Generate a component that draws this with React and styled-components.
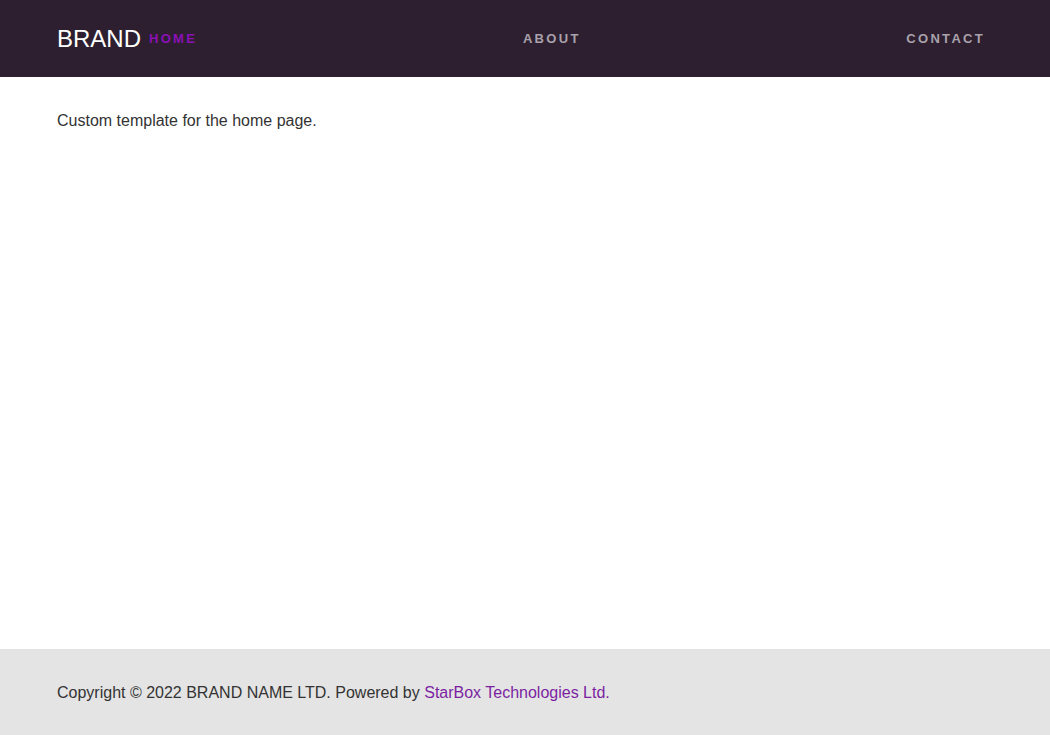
import React from "react";
import styled, { createGlobalStyle } from "styled-components";

const GlobalStyle = createGlobalStyle`
  html, body {
    margin: 0;
    padding: 0;
  }
  body {
    font-family: "Liberation Sans", Arial, sans-serif;
    color: #333;
    background: #fff;
  }
`;

const Page = styled.div`
  display: flex;
  flex-direction: column;
  min-height: 100vh;
`;

const Header = styled.header`
  height: 77px;
  background-color: #2d1f2f;
  display: flex;
  align-items: center;
  justify-content: space-between;
  padding: 0 65px 0 57px;
`;

const BrandGroup = styled.div`
  display: flex;
  align-items: center;
  gap: 8px;
`;

const Brand = styled.a`
  font-size: 24px;
  color: #fff;
  text-decoration: none;
`;

const NavLink = styled.a`
  font-size: 13px;
  font-weight: bold;
  letter-spacing: 2.3px;
  text-transform: uppercase;
  text-decoration: none;
  color: ${props => (props.active ? "#8b10b6" : "#a9a1ab")};
`;

const Main = styled.main`
  flex: 1;
  padding: 35px 57px;
`;

const Text = styled.p`
  margin: 0;
  font-size: 16px;
  color: #333;
`;

const Footer = styled.footer`
  background-color: #e4e4e4;
  padding: 35px 57px 33px;
  height: 86px;
  box-sizing: border-box;
  display: flex;
  align-items: center;
  font-size: 16px;
  color: #333;
`;

const FooterLink = styled.a`
  color: #7b1fa2;
  text-decoration: none;
`;

function App() {
  return (
    <Page>
      <GlobalStyle />
      <Header>
        <BrandGroup>
          <Brand href="#">BRAND</Brand>
          <NavLink href="#" active>
            Home
          </NavLink>
        </BrandGroup>
        <NavLink href="#">About</NavLink>
        <NavLink href="#">Contact</NavLink>
      </Header>
      <Main>
        <Text>Custom template for the home page.</Text>
      </Main>
      <Footer>
        <span>
          Copyright © 2022 BRAND NAME LTD. Powered by{" "}
          <FooterLink href="#">StarBox Technologies Ltd.</FooterLink>
        </span>
      </Footer>
    </Page>
  );
}

export default App;
